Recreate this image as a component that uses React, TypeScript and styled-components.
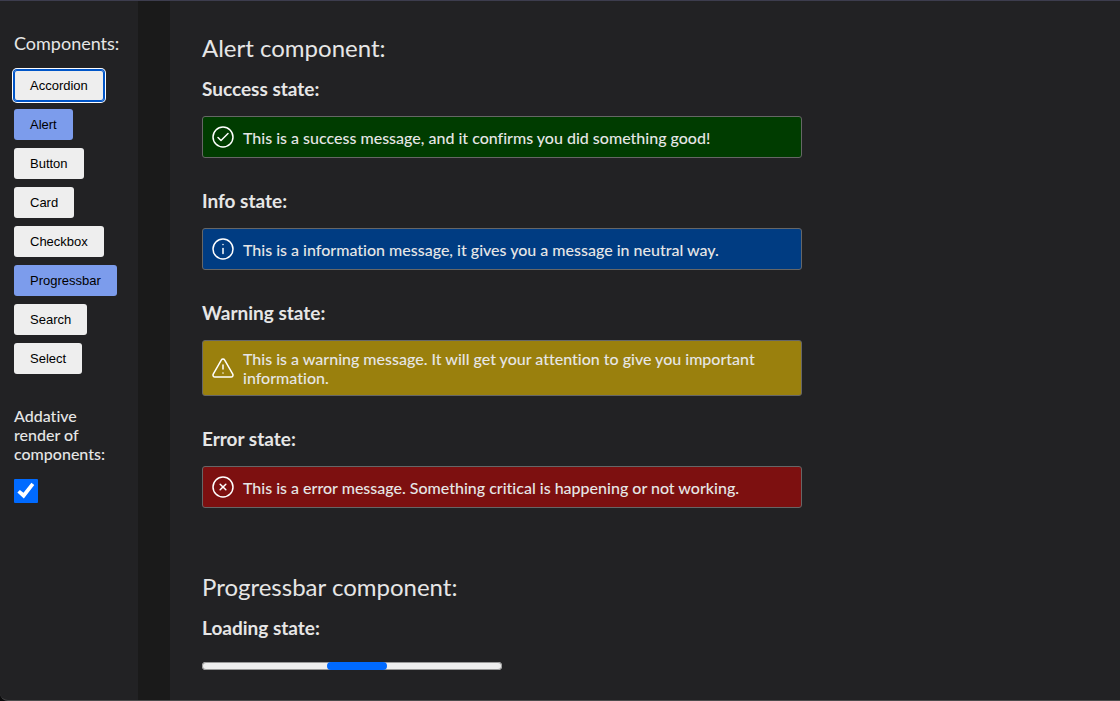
import React, { useState } from "react";
import styled, { createGlobalStyle } from "styled-components";

const GlobalStyle = createGlobalStyle`
  *, *::before, *::after { box-sizing: border-box; }
  body {
    margin: 0;
    background: #0b0b0c;
    color: #e6e6e6;
    font-family: Lato, sans-serif;
    font-size: 16px;
    line-height: 19px;
    font-variant-ligatures: none;
  }
`;

const Page = styled.div`
  display: grid;
  grid-template-columns: 138px 32px 1fr;
  min-height: 100vh;
  overflow: hidden;
  background: #222224;
  border-top: 1px solid #3d3d4e;
  border-bottom: 1px solid #4c4c4d;
  border-radius: 0 0 0 8px;
`;

const Sidebar = styled.nav`
  padding: 32px 14px;
`;

const Divider = styled.div`
  background: #1a1a1a;
`;

const Main = styled.main`
  padding: 32px 32px 30px;
`;

const SidebarTitle = styled.h2`
  margin: 0 0 16px;
  font-size: 18px;
  font-weight: 400;
  line-height: 21px;
`;

const ButtonList = styled.div`
  display: flex;
  flex-direction: column;
  align-items: flex-start;
  gap: 8px;
  margin-bottom: 32px;
`;

const NavButton = styled.button<{ $active: boolean; $focused: boolean }>`
  height: 31px;
  padding: 0 16px;
  border: 0;
  border-radius: 3px;
  background: ${(p) => (p.$active ? "#7c9cec" : "#eeeeee")};
  color: #000;
  font: 13px/15px "Liberation Sans", Arial, sans-serif;
  cursor: pointer;
  box-shadow: ${(p) =>
    p.$focused ? "inset 0 0 0 1px #0055c8, 0 0 0 1px #0055c8, 0 0 0 2px #fff" : "none"};
`;

const ToggleLabel = styled.label`
  display: flex;
  flex-direction: column;
  align-items: flex-start;
  gap: 16px;
  font-weight: 500;
`;

const Checkbox = styled.input`
  appearance: none;
  display: grid;
  place-items: center;
  width: 24px;
  height: 24px;
  margin: 0;
  border-radius: 1px;
  background: #eee;

  &:checked {
    background: #006aff;
  }

  &:checked::before {
    content: "";
    width: 18px;
    height: 18px;
    background: #fff;
    clip-path: polygon(2% 58%, 16% 44%, 36% 60%, 80% 4%, 96% 16%, 38% 92%);
  }
`;

const ComponentSection = styled.section`
  & + & {
    margin-top: 64px;
  }
`;

const ComponentTitle = styled.h1`
  margin: 0 0 16px;
  font-size: 24px;
  font-weight: 400;
  line-height: 29px;
`;

const State = styled.div`
  & + & {
    margin-top: 32px;
  }
`;

const StateTitle = styled.h2`
  margin: 0 0 16px;
  font-size: 19px;
  font-weight: 700;
  line-height: 22px;
`;

const AlertBox = styled.div<{ $color: string }>`
  display: flex;
  align-items: center;
  gap: 8px;
  max-width: 600px;
  padding: 8px;
  border: 1px solid #666;
  border-radius: 3px;
  background: ${(p) => p.$color};
  font-weight: 500;
`;

const AlertIcon = styled.svg`
  flex: none;
  width: 24px;
  height: 24px;
  fill: none;
  stroke: #fff;
  stroke-width: 1.5;
  stroke-linecap: round;
  stroke-linejoin: round;
`;

const Track = styled.div`
  max-width: 300px;
  height: 8px;
  margin-top: 23px;
  border-radius: 4px;
  background: #eee;
  box-shadow: inset 0 0 0 1px #999;
`;

const Thumb = styled.div`
  width: 60px;
  height: 8px;
  margin-left: 125px;
  border-radius: 4px;
  background: #006aff;
`;

type Kind = "success" | "info" | "warning" | "error";

const circle = "M12 22a10 10 0 1 0 0-20 10 10 0 0 0 0 20Z";

const icons: Record<Kind, string[]> = {
  success: [circle, "M7 12.5l3 3 7-7"],
  info: [circle, "M12 11.5v5", "M12 7.51l.01-.011"],
  warning: [
    "M20.043 21H3.957c-1.538 0-2.5-1.664-1.734-2.997l8.043-13.988c.77-1.337 2.699-1.337 3.468 0l8.043 13.988C22.543 19.336 21.581 21 20.043 21Z",
    "M12 9v4",
    "M12 17.01l.01-.011",
  ],
  error: [circle, "M9.172 14.828l5.657-5.656", "M9.172 9.172l5.657 5.656"],
};

const alerts: { kind: Kind; title: string; color: string; text: string }[] = [
  {
    kind: "success",
    title: "Success state:",
    color: "#003c00",
    text: "This is a success message, and it confirms you did something good!",
  },
  {
    kind: "info",
    title: "Info state:",
    color: "#003c82",
    text: "This is a information message, it gives you a message in neutral way.",
  },
  {
    kind: "warning",
    title: "Warning state:",
    color: "#9a800d",
    text: "This is a warning message. It will get your attention to give you important information.",
  },
  {
    kind: "error",
    title: "Error state:",
    color: "#7d1010",
    text: "This is a error message. Something critical is happening or not working.",
  },
];

const names = ["Accordion", "Alert", "Button", "Card", "Checkbox", "Progressbar", "Search", "Select"];

export default function App() {
  const [active, setActive] = useState<string[]>(["Alert", "Progressbar"]);
  const [focused, setFocused] = useState("Accordion");
  const [additive, setAdditive] = useState(true);

  const toggle = (name: string) => {
    setFocused(name);
    if (active.includes(name)) setActive(active.filter((n) => n !== name));
    else setActive(additive ? [...active, name] : [name]);
  };

  return (
    <>
      <GlobalStyle />
      <Page>
        <Sidebar>
          <SidebarTitle>Components:</SidebarTitle>
          <ButtonList>
            {names.map((name) => (
              <NavButton
                key={name}
                type="button"
                $active={active.includes(name)}
                $focused={focused === name}
                aria-pressed={active.includes(name)}
                onClick={() => toggle(name)}
              >
                {name}
              </NavButton>
            ))}
          </ButtonList>
          <ToggleLabel>
            Addative render of components:
            <Checkbox
              type="checkbox"
              checked={additive}
              onChange={(e) => setAdditive(e.target.checked)}
            />
          </ToggleLabel>
        </Sidebar>
        <Divider />
        <Main>
          {active.includes("Alert") && (
            <ComponentSection>
              <ComponentTitle>Alert component:</ComponentTitle>
              {alerts.map((a) => (
                <State key={a.kind}>
                  <StateTitle>{a.title}</StateTitle>
                  <AlertBox role="alert" $color={a.color}>
                    <AlertIcon viewBox="0 0 24 24" aria-hidden="true">
                      {icons[a.kind].map((d) => (
                        <path key={d} d={d} />
                      ))}
                    </AlertIcon>
                    <span>{a.text}</span>
                  </AlertBox>
                </State>
              ))}
            </ComponentSection>
          )}
          {active.includes("Progressbar") && (
            <ComponentSection>
              <ComponentTitle>Progressbar component:</ComponentTitle>
              <State>
                <StateTitle>Loading state:</StateTitle>
                <Track role="progressbar" aria-label="Loading">
                  <Thumb />
                </Track>
              </State>
            </ComponentSection>
          )}
        </Main>
      </Page>
    </>
  );
}
